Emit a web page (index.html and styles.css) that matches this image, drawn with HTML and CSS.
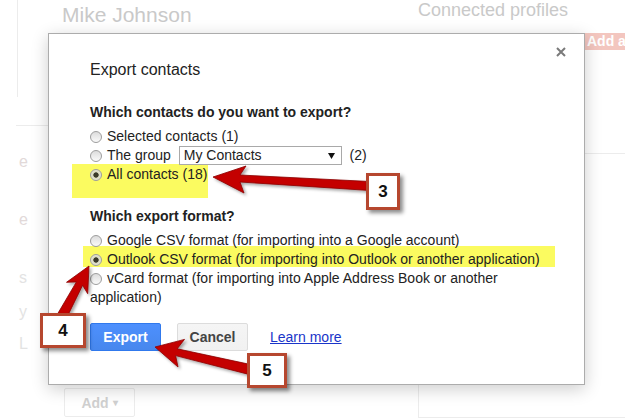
FILE: index.html
```html
<!DOCTYPE html>
<html lang="en">
  <head>
    <meta charset="UTF-8" />
    <meta name="viewport" content="width=device-width, initial-scale=1.0" />
    <title>Export contacts</title>
    <link rel="stylesheet" href="styles.css">
  </head>
  <body>
    <div class="page">
      <div class="main">
        <div class="card">
          <h1 class="name">Mike Johnson</h1>
        </div>
        <div class="rule"></div>
        <div class="fields">
          <div class="field f1">e</div>
          <div class="field f2">e</div>
          <div class="field f3">s</div>
          <div class="field f4">y</div>
          <div class="field f5">L</div>
        </div>
        <div class="add-btn">Add <span class="tri">&#9662;</span></div>
      </div>

      <div class="side">
        <h2>Connected profiles</h2>
        <span class="add-profile">Add a</span>
        <div class="side-rule"></div>
        <div class="side-panel"></div>
      </div>

      <div class="dialog">
        <span class="close">
          <svg width="10" height="10" viewBox="0 0 10 10">
            <path d="M1 1 L9 9 M9 1 L1 9" stroke="#7a7a7a" stroke-width="2" />
          </svg>
        </span>
        <h2>Export contacts</h2>

        <h3>Which contacts do you want to export?</h3>
        <label class="opt"><input type="radio" name="who" />Selected contacts (1)</label>
        <label class="opt">
          <input type="radio" name="who" />The group
          <span class="select">
            <span>My Contacts</span>
            <svg width="7" height="6" viewBox="0 0 7 6"><path d="M0 0 H7 L3.5 6 Z" fill="#111" /></svg>
          </span>
          <span class="count">(2)</span>
        </label>
        <label class="opt mark mark-all"><input type="radio" name="who" checked />All contacts (18)</label>

        <h3>Which export format?</h3>
        <label class="opt"><input type="radio" name="fmt" />Google CSV format (for importing into a Google account)</label>
        <label class="opt mark mark-outlook"><input type="radio" name="fmt" checked />Outlook CSV format (for importing into Outlook or another application)</label>
        <label class="opt"><input type="radio" name="fmt" />vCard format (for importing into Apple Address Book or another application)</label>

        <div class="actions">
          <button class="btn btn-primary">Export</button>
          <button class="btn btn-default">Cancel</button>
          <a class="link" href="#">Learn more</a>
        </div>
      </div>

      <svg class="arrows" width="625" height="419" viewBox="0 0 625 419">
        <defs>
          <filter id="shadow" x="-20%" y="-20%" width="140%" height="160%">
            <feDropShadow dx="2" dy="2" stdDeviation="1.5" flood-color="#000" flood-opacity="0.35" />
          </filter>
        </defs>
        <g fill="#c40000" stroke="#8a0000" stroke-width="0.8" filter="url(#shadow)">
          <polygon points="213,177 246,166 240,175 370,181.5 370,190.5 240,182 244,193" />
          <polygon points="89,266 66.5,282.3 76.4,281.9 56.6,315.6 65.4,320.4 82.6,285.3 87.7,293.7" />
          <polygon points="155,347 184.5,339.4 177.2,348.8 253.2,365.1 250.8,374.9 175.6,355.6 178,367" />
        </g>
      </svg>

      <div class="callout c3">3</div>
      <div class="callout c4">4</div>
      <div class="callout c5">5</div>
    </div>
  </body>
</html>
```

FILE: styles.css
```css
* {
  box-sizing: border-box;
}
body {
  margin: 0;
  font-family: "Liberation Sans", Arial, sans-serif;
  background-color: #fff;
}
.page {
  position: relative;
  width: 625px;
  height: 419px;
  overflow: hidden;
  display: flex;
}

/* faded page behind the dialog */
.main {
  width: 418px;
  flex: none;
}
.card {
  height: 97px;
  margin-left: 17px;
  border-left: 1px solid #ececec;
  padding: 3px 0 0 44px;
}
.name {
  margin: 0;
  font-size: 21px;
  font-weight: normal;
  line-height: 24px;
  color: #c9c9c9;
}
.rule {
  margin: 28px 0 0 16px;
  border-top: 1px solid #ececec;
}
.fields {
  padding-left: 19px;
}
.field {
  font-size: 16px;
  line-height: 18px;
  color: #e2d9d9;
}
.f1 { margin-top: 27px; }
.f2 { margin-top: 40px; }
.f3 { margin-top: 40px; color: #e3e3e3; }
.f4 { margin-top: 16px; color: #e3e3e3; }
.f5 { margin-top: 14px; color: #e3e3e3; }
.add-btn {
  width: 71px;
  height: 29px;
  margin: 35px 0 0 64px;
  border: 1px solid #ececec;
  border-radius: 2px;
  display: flex;
  align-items: center;
  justify-content: center;
  font-size: 14px;
  font-weight: bold;
  color: #d0d0d0;
}
.add-btn .tri {
  font-size: 10px;
  margin-left: 4px;
}
.side {
  flex: 1;
}
.side h2 {
  margin: -1px 0 0;
  font-size: 18px;
  font-weight: normal;
  line-height: 22px;
  color: #c9c9c9;
}
.add-profile {
  display: block;
  margin: 12px 0 0 164px;
  padding: 0 0 0 5px;
  background-color: #f3c6bf;
  color: #fff;
  font-size: 14px;
  font-weight: bold;
  line-height: 17px;
  white-space: nowrap;
}
.side-rule {
  margin: 103px 0 0 165px;
  border-top: 1px solid #ececec;
}
.side-panel {
  margin-top: 205px;
  height: 59px;
  border-left: 1px solid #ececec;
  border-bottom: 1px solid #ececec;
}

/* dialog */
.dialog {
  position: absolute;
  left: 48px;
  top: 33px;
  width: 537px;
  height: 352px;
  padding: 26px 30px 0 41px;
  background-color: #fff;
  border: 1px solid #acacac;
  box-shadow: 0 4px 16px rgba(0, 0, 0, 0.2);
  z-index: 1;
  color: #222;
  font-size: 14px;
}
.close {
  position: absolute;
  top: 13px;
  right: 18px;
  line-height: 0;
}
.dialog h2 {
  margin: 0;
  font-size: 16px;
  font-weight: normal;
  line-height: 20px;
}
.dialog h3 {
  margin: 23px 0 5px;
  font-size: 14px;
  font-weight: bold;
  line-height: 19px;
}
.opt {
  display: block;
  line-height: 19px;
}
.opt input {
  appearance: none;
  -webkit-appearance: none;
  width: 12px;
  height: 12px;
  margin: 0 5px 0 0;
  vertical-align: -2px;
  border: 1px solid #9d9d9d;
  border-radius: 50%;
  background: linear-gradient(#dcdcdc, #fafafa);
}
.opt input:checked {
  background: radial-gradient(circle, #3a3a2a 0 2.3px, #d9d9c0 3px, #f0f0e8 100%);
}
.select {
  display: inline-flex;
  align-items: center;
  justify-content: space-between;
  width: 163px;
  height: 19px;
  margin-left: 4px;
  padding: 0 6px 0 4px;
  border: 1px solid #a9a9a9;
  line-height: 17px;
  background-color: #fff;
}
.count {
  margin-left: 4px;
}
.mark {
  position: relative;
}
.mark::before {
  content: "";
  position: absolute;
  z-index: -1;
  background-color: #fbfb60;
}
.mark-all::before {
  left: -18px;
  top: -1px;
  width: 136px;
  height: 34px;
}
.mark-outlook::before {
  left: -7px;
  top: -4px;
  width: 472px;
  height: 21px;
}
.actions {
  display: flex;
  align-items: center;
  margin-top: 16px;
}
.btn {
  width: 71px;
  height: 28px;
  border-radius: 2px;
  font-family: inherit;
  font-size: 14px;
  font-weight: bold;
  padding: 0;
}
.btn-primary {
  background: linear-gradient(#4d90fe, #4787ed);
  border: 1px solid #3079ed;
  color: #fff;
}
.btn-default {
  margin-left: 16px;
  background: linear-gradient(#f5f5f5, #f1f1f1);
  border: 1px solid #dcdcdc;
  color: #444;
}
.link {
  margin-left: 22px;
  color: #1a35c9;
  text-decoration: underline;
}

/* annotations */
.arrows {
  position: absolute;
  left: 0;
  top: 0;
  z-index: 2;
  pointer-events: none;
}
.callout {
  position: absolute;
  z-index: 3;
  display: flex;
  align-items: center;
  justify-content: center;
  background-color: #fff;
  border: 3px solid #b6472f;
  box-shadow: 3px 3px 4px rgba(0, 0, 0, 0.45);
  font-size: 17px;
  font-weight: bold;
  color: #111;
}
.c3 {
  left: 366px;
  top: 173px;
  width: 34px;
  height: 37px;
}
.c4 {
  left: 40px;
  top: 313px;
  width: 46px;
  height: 35px;
}
.c5 {
  left: 247px;
  top: 353px;
  width: 40px;
  height: 35px;
}
```
